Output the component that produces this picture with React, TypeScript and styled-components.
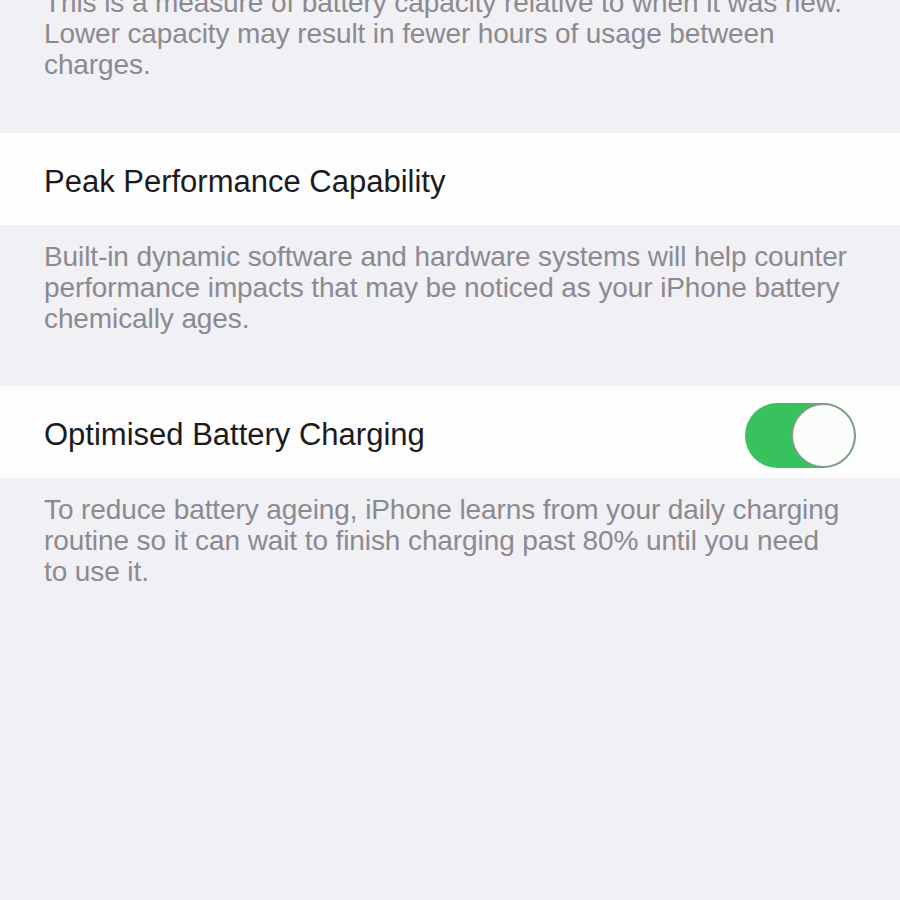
import React from "react";
import styled, { createGlobalStyle } from "styled-components";

const GlobalStyle = createGlobalStyle`
  html, body {
    margin: 0;
    padding: 0;
    background: #f1f0f5;
  }
  body {
    font-family: "Liberation Sans", Arial, sans-serif;
    -webkit-font-smoothing: antialiased;
  }
`;

interface Section {
  title: string;
  footnote: string;
  toggle?: boolean;
}

const sections: Section[] = [
  {
    title: "Peak Performance Capability",
    footnote:
      "Built-in dynamic software and hardware systems will help counter performance impacts that may be noticed as your iPhone battery chemically ages.",
  },
  {
    title: "Optimised Battery Charging",
    footnote:
      "To reduce battery ageing, iPhone learns from your daily charging routine so it can wait to finish charging past 80% until you need to\u00a0use\u00a0it.",
    toggle: true,
  },
];

export default function App() {
  return (
    <>
      <GlobalStyle />
      <Screen>
        <Footnote $first>
          This is a measure of battery capacity relative to when it was new.
          Lower capacity may result in fewer hours of usage between charges.
        </Footnote>
        {sections.map((s) => (
          <React.Fragment key={s.title}>
            <Row>
              <Title>{s.title}</Title>
              {s.toggle && (
                <Switch>
                  <Knob />
                </Switch>
              )}
            </Row>
            <Footnote>{s.footnote}</Footnote>
          </React.Fragment>
        ))}
      </Screen>
    </>
  );
}

const Screen = styled.div`
  width: 900px;
  height: 900px;
  overflow: hidden;
  background: #f1f0f5;
`;

const Footnote = styled.p<{ $first?: boolean }>`
  margin: ${(p) => (p.$first ? "-13px 0 0" : "0")};
  padding: ${(p) => (p.$first ? "0 40px 53px 44px" : "16px 40px 52px 44px")};
  font-size: 28px;
  line-height: 31px;
  color: #8b8a90;
  letter-spacing: -0.1px;
`;

const Row = styled.div`
  height: 92px;
  box-sizing: border-box;
  background: #fdfdfe;
  display: flex;
  align-items: center;
  justify-content: space-between;
  padding: 6px 44px 0;
`;

const Title = styled.span`
  font-size: 31px;
  color: #1b1b1d;
`;

const Switch = styled.div`
  width: 111px;
  height: 65px;
  border-radius: 33px;
  background: #37c25e;
  display: flex;
  align-items: center;
  justify-content: flex-end;
  padding: 2px;
  box-sizing: border-box;
`;

const Knob = styled.div`
  width: 61px;
  height: 61px;
  border-radius: 50%;
  background: #fbfdfb;
  box-shadow: 0 0 0 1.5px #8e9691;
`;
